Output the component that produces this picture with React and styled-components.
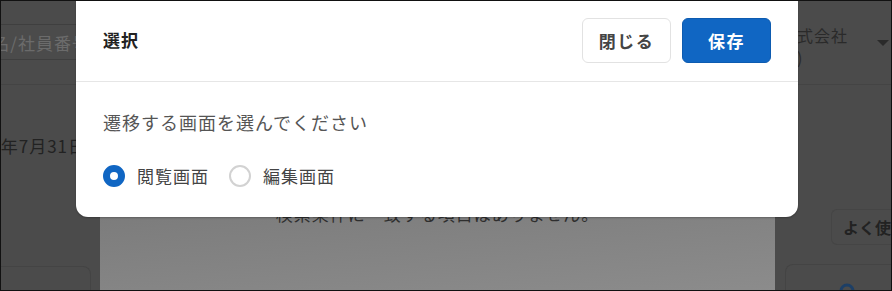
import React, { useState } from 'react';
import styled, { createGlobalStyle } from 'styled-components';

const GlobalStyle = createGlobalStyle`
  * { box-sizing: border-box; }
  body {
    margin: 0;
    font-family: "Noto Sans CJK JP", "Noto Sans", sans-serif;
  }
`;

const Screen = styled.div`
  position: relative;
  width: 892px;
  height: 291px;
  overflow: hidden;
  background: #4b4b4b;
  border: 1px solid #111;
`;

const TopBar = styled.header`
  height: 84px;
  border-bottom: 1px solid #444;
  display: flex;
  align-items: flex-start;
  justify-content: space-between;
  padding-top: 23px;
`;

const SearchBox = styled.div`
  width: 276px;
  height: 36px;
  margin-left: -180px;
  border: 1px solid #3f3f3f;
  border-left: none;
  display: flex;
  align-items: center;
  justify-content: flex-end;
  padding-right: 6px;
  color: #6b6b6b;
  font-size: 17px;
  letter-spacing: 1px;
  white-space: nowrap;
`;

const Company = styled.div`
  display: flex;
  align-items: flex-start;
  gap: 29px;
  margin-right: 2px;
  color: #2a2a2a;
  font-size: 16px;
  line-height: 22px;
  letter-spacing: 1px;
`;

const CompanyName = styled.div`
  width: 68px;
  white-space: nowrap;
`;

const Caret = styled.span`
  margin-top: 16px;
  width: 0;
  height: 0;
  border-left: 6px solid transparent;
  border-right: 6px solid transparent;
  border-top: 6px solid #2a2a2a;
`;

const Main = styled.main`
  display: grid;
  grid-template-columns: 99px 675px 1fr;
  height: 206px;
`;

const LeftCol = styled.div`
  display: flex;
  flex-direction: column;
  justify-content: space-between;
  padding-top: 48px;
`;

const DateText = styled.div`
  margin-left: -42px;
  color: #222;
  font-size: 17px;
  letter-spacing: 1px;
  white-space: nowrap;
`;

const SideCard = styled.div`
  height: 28px;
  width: 90px;
  border: 1px solid #444;
  border-left: none;
  border-bottom: none;
  border-radius: 0 8px 0 0;
  position: relative;
`;

const Dot = styled.span`
  position: absolute;
  left: 12px;
  bottom: -6px;
  width: 10px;
  height: 10px;
  border-radius: 50%;
  background: #1d3f66;
`;

const CenterPanel = styled.div`
  background: linear-gradient(175deg, #6c6c6c 0%, #7e7e7e 55%, #8c8c8c 100%);
  display: flex;
  justify-content: center;
  padding-top: 116px;
  color: #2e2e2e;
  font-size: 17px;
  letter-spacing: 1px;
`;

const RightCol = styled.div`
  display: flex;
  flex-direction: column;
  align-items: flex-end;
  padding-top: 124px;
  gap: 19px;
`;

const GhostButton = styled.div`
  width: 60px;
  height: 36px;
  border: 1px solid #454545;
  border-right: none;
  border-radius: 6px 0 0 6px;
  display: flex;
  align-items: center;
  padding-left: 11px;
  color: #222;
  font-size: 16px;
  font-weight: 700;
  white-space: nowrap;
  overflow: hidden;
`;

const SideCardRight = styled.div`
  width: 106px;
  height: 30px;
  border: 1px solid #444;
  border-right: none;
  border-bottom: none;
  border-radius: 8px 0 0 0;
  display: flex;
  justify-content: center;
  padding-top: 18px;
  padding-left: 20px;
`;

const Modal = styled.div`
  position: absolute;
  left: 75px;
  top: -1px;
  width: 722px;
  background: #fff;
  border-radius: 0 0 12px 12px;
  box-shadow: 0 1px 2px rgba(0, 0, 0, 0.25);
`;

const ModalHeader = styled.div`
  height: 82px;
  padding: 0 27px;
  display: flex;
  align-items: center;
  justify-content: space-between;
  border-bottom: 1px solid #e6e6e6;
`;

const Title = styled.h2`
  margin: 0 0 3px;
  font-size: 17px;
  font-weight: 700;
  color: #222;
  letter-spacing: 1px;
`;

const Actions = styled.div`
  display: flex;
  gap: 11px;
`;

const Button = styled.button`
  width: 89px;
  height: 45px;
  border-radius: 6px;
  font-family: inherit;
  font-size: 17px;
  font-weight: 700;
  letter-spacing: 1.5px;
  cursor: pointer;
  border: 1px solid ${p => (p.$primary ? '#0d5bb0' : '#e2e2e2')};
  background: ${p => (p.$primary ? '#1066c3' : '#fff')};
  color: ${p => (p.$primary ? '#fff' : '#444')};
`;

const ModalBody = styled.div`
  padding: 25px 27px 26px;
`;

const Prompt = styled.p`
  margin: 0 0 24px;
  font-size: 18px;
  line-height: 30px;
  color: #555;
  letter-spacing: 1px;
`;

const RadioGroup = styled.div`
  display: flex;
  align-items: center;
  gap: 20px;
`;

const RadioLabel = styled.label`
  display: flex;
  align-items: center;
  gap: 12px;
  font-size: 17px;
  line-height: 30px;
  color: #444;
  letter-spacing: 1px;
  cursor: pointer;
`;

const RadioCircle = styled.span`
  width: 22px;
  height: 22px;
  border-radius: 50%;
  border: ${p => (p.$checked ? '7px solid #1066c3' : '2px solid #d2d2d2')};
  background: #fff;
`;

const options = ['閲覧画面', '編集画面'];

export default function App() {
  const [selected, setSelected] = useState(0);

  return (
    <>
      <GlobalStyle />
      <Screen>
        <TopBar>
          <SearchBox>氏名/社員番号</SearchBox>
          <Company>
            <CompanyName>
              株式会社
              <br />
              部)
            </CompanyName>
            <Caret />
          </Company>
        </TopBar>
        <Main>
          <LeftCol>
            <DateText>2024年7月31日</DateText>
            <SideCard>
              <Dot />
            </SideCard>
          </LeftCol>
          <CenterPanel>検索条件に一致する項目はありません。</CenterPanel>
          <RightCol>
            <GhostButton>よく使う</GhostButton>
            <SideCardRight>
              <svg width="20" height="14" viewBox="0 0 20 14">
                <circle cx="8" cy="8" r="6" fill="none" stroke="#1d3f66" strokeWidth="3" />
              </svg>
            </SideCardRight>
          </RightCol>
        </Main>

        <Modal>
          <ModalHeader>
            <Title>選択</Title>
            <Actions>
              <Button>閉じる</Button>
              <Button $primary>保存</Button>
            </Actions>
          </ModalHeader>
          <ModalBody>
            <Prompt>遷移する画面を選んでください</Prompt>
            <RadioGroup>
              {options.map((label, i) => (
                <RadioLabel key={label} onClick={() => setSelected(i)}>
                  <RadioCircle $checked={selected === i} />
                  {label}
                </RadioLabel>
              ))}
            </RadioGroup>
          </ModalBody>
        </Modal>
      </Screen>
    </>
  );
}
